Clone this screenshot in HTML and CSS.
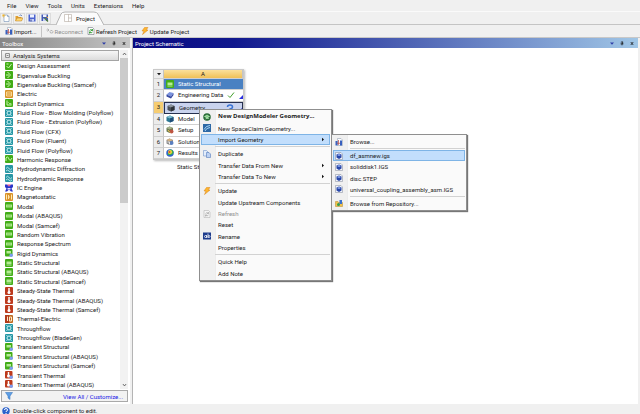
FILE: index.html
```html
<!DOCTYPE html>
<html lang="en">
<head>
    <meta charset="UTF-8">
    <meta name="viewport" content="width=device-width, initial-scale=1.0">
    <title>Workbench</title>
    <link rel="stylesheet" href="styles.css">
</head>
<body>
    <!-- Icon set -->
    <svg class="sprite" aria-hidden="true">
        <symbol id="check" viewBox="0 0 16 16"><rect width="16" height="16" rx="2" fill="#43ad18"/><path d="M3 8l4 4 6-8M3 4h4" stroke="#c9f5ad" stroke-width="2" fill="none"/></symbol>
        <symbol id="buckling" viewBox="0 0 16 16"><rect width="16" height="16" rx="2" fill="#43ad18"/><path d="M5 2l6 6-6 6M2 8h6" stroke="#c9f5ad" stroke-width="2" fill="none"/></symbol>
        <symbol id="electric" viewBox="0 0 16 16"><rect width="16" height="16" rx="2" fill="#d9932a"/><path d="M3 4v8h10V4zM6 6v4M10 6v4" stroke="#ffe9b0" stroke-width="1.6" fill="none"/></symbol>
        <symbol id="explicit" viewBox="0 0 16 16"><rect width="16" height="16" rx="2" fill="#43ad18"/><path d="M4 3v9h9M7 7l2 2 4 1" stroke="#c9f5ad" stroke-width="2" fill="none"/></symbol>
        <symbol id="fluid" viewBox="0 0 16 16"><rect width="16" height="16" rx="2" fill="#2796a4"/><circle cx="8" cy="8" r="4" stroke="#d5f8fa" stroke-width="2" fill="#2796a4"/><path d="M2 3h3M11 3h3M2 13h3M11 13h3" stroke="#9fe0e4" stroke-width="1.5"/></symbol>
        <symbol id="harmonic" viewBox="0 0 16 16"><rect width="16" height="16" rx="2" fill="#43ad18"/><path d="M2 12V6q3-5 5 0t3 5 4-5" stroke="#c9f5ad" stroke-width="2" fill="none"/></symbol>
        <symbol id="hydro" viewBox="0 0 16 16"><rect width="16" height="16" rx="2" fill="#2796a4"/><path d="M2 7q3-5 6 0t6 0M2 12q3-4 6 0t6 0" stroke="#c5eff2" stroke-width="1.8" fill="none"/></symbol>
        <symbol id="engine" viewBox="0 0 16 16"><path d="M0 1h4l4 4 4-4h4v5l-3 3 3 6h-4l-4-4-4 4H0l3-6-3-3z" fill="#2b35c8"/><path d="M4 1h8L8 5z" fill="#e64a8a"/><path d="M5 8h6v3H5z" fill="#e8e0ff"/></symbol>
        <symbol id="magnet" viewBox="0 0 16 16"><rect width="16" height="16" rx="2" fill="#d9932a"/><path d="M3 3v10M13 3v10M6 8h4M7 4v8" stroke="#ffe9b0" stroke-width="2"/></symbol>
        <symbol id="modal" viewBox="0 0 16 16"><rect width="16" height="16" rx="2" fill="#43ad18"/><path d="M3 5v6M6 4v8M10 4v8M13 5v6M3 8h10" stroke="#c9f5ad" stroke-width="1.5"/></symbol>
        <symbol id="static" viewBox="0 0 16 16"><rect width="16" height="16" rx="2" fill="#43ad18"/><rect x="3" y="5" width="10" height="5" fill="#b6eb96"/><path d="M3 12h10" stroke="#e0fbd0" stroke-width="1.5"/></symbol>
        <symbol id="transient" viewBox="0 0 16 16"><rect width="15" height="15" rx="2" fill="#43ad18"/><rect x="3" y="4" width="9" height="5" fill="#b6eb96"/><circle cx="12.500" cy="12.500" r="3.500" fill="#7d9cf0"/></symbol>
        <symbol id="thermal" viewBox="0 0 16 16"><rect width="16" height="16" rx="2" fill="#bd3a1d"/><path d="M8 2v8" stroke="#fff" stroke-width="3"/><circle cx="8" cy="11" r="3" fill="#fff"/></symbol>
        <symbol id="thermalelectric" viewBox="0 0 16 16"><rect width="16" height="16" rx="2" fill="#c06a20"/><rect width="8" height="16" fill="#b23c1c"/><path d="M5 3v9M9 4v8h4V4z" stroke="#ffe9c8" stroke-width="2" fill="none"/></symbol>
        <symbol id="transthermal" viewBox="0 0 16 16"><rect width="15" height="15" rx="2" fill="#bd3a1d"/><path d="M7 2v8" stroke="#fff" stroke-width="3"/><circle cx="7" cy="10" r="3" fill="#fff"/><circle cx="12.500" cy="12.500" r="3.500" fill="#7d9cf0"/></symbol>
        <symbol id="new" viewBox="0 0 16 16"><path d="M4 2h7l3 3v10H4z" fill="#fff" stroke="#5b7da8"/><path d="M11 2v3h3" fill="none" stroke="#5b7da8"/><path d="M3 0v7M0 3h7M1 1l4 4M5 1L1 5" stroke="#f0b429" stroke-width="1.2"/></symbol>
        <symbol id="open" viewBox="0 0 16 16"><path d="M1 4h5l1 2h6v8H1z" fill="#e0a030"/><path d="M4 8h12l-3 6H1z" fill="#ffd873" stroke="#b87818"/><path d="M9 3q3-3 5 1" stroke="#4a6cb0" fill="none" stroke-width="1.500"/></symbol>
        <symbol id="save" viewBox="0 0 16 16"><path d="M1 1h14v14H1z" fill="#4a62cf"/><rect x="4" y="1" width="8" height="6" fill="#eef2ff"/><rect x="4" y="10" width="8" height="5" fill="#c4cef4"/><rect x="5" y="11" width="2" height="4" fill="#27388f"/></symbol>
        <symbol id="saveas" viewBox="0 0 16 16"><path d="M1 1h13v13H1z" fill="#445bb6"/><rect x="4" y="1" width="7" height="5" fill="#eef2ff"/><rect x="4" y="9" width="6" height="5" fill="#c4cef4"/><path d="M7 8l7 7" stroke="#4e7d3a" stroke-width="2.500"/><path d="M11 5l3 3" stroke="#f0b429" stroke-width="2"/></symbol>
        <symbol id="project" viewBox="0 0 16 16"><path d="M1 1h14v14H1zM9 1v14M9 8h6" fill="#fff" stroke="#a79a8e"/></symbol>
        <symbol id="import" viewBox="0 0 16 16"><path d="M5 1h7l3 3v11H5z" fill="#fff" stroke="#8190a8"/><path d="M1 6h4v9H1zM10 5h4v10h-4z" fill="#3560c0"/><path d="M7 4v8M4 9l3 4 3-4" stroke="#b54b48" stroke-width="1.500" fill="none"/></symbol>
        <symbol id="reconnect" viewBox="0 0 16 16"><path d="M1 6h5M3 3l3 3-3 3M8 9a3 3 0 1 1 5 3H9z" stroke="#aaa" stroke-width="1.600" fill="none"/></symbol>
        <symbol id="refresh" viewBox="0 0 16 16"><path d="M2 1h9l3 3v11H2z" fill="#fff" stroke="#59616d"/><path d="M5 7q3-4 6 0M11 4v3H8M11 10q-3 4-6 0M5 13v-3h3" stroke="#269226" stroke-width="1.700" fill="none"/></symbol>
        <symbol id="refreshoff" viewBox="0 0 16 16"><path d="M2 1h9l3 3v11H2z" fill="#f5f5f5" stroke="#aaa"/><path d="M5 7q3-4 6 0M11 4v3H8M11 10q-3 4-6 0M5 13v-3h3" stroke="#aaa" stroke-width="1.500" fill="none"/></symbol>
        <symbol id="bolt" viewBox="0 0 16 16"><path d="M7 1h7l-4 5h4L3 15l3-7H2z" fill="#ffb62e" stroke="#d98212"/></symbol>
        <symbol id="pin" viewBox="0 0 16 16"><path d="M5 1h6v9H5zM2 10h12M8 10v6M10 1v9" fill="none" stroke="currentColor" stroke-width="2"/></symbol>
        <symbol id="close" viewBox="0 0 16 16"><path d="M3 2l10 12M13 2L3 14" stroke="currentColor" stroke-width="3"/></symbol>
        <symbol id="down" viewBox="0 0 16 16"><path d="M0 4h16l-8 9z" fill="currentColor"/></symbol>
        <symbol id="chevup" viewBox="0 0 16 16"><path d="M3 11l5-6 5 6" fill="none" stroke="#444" stroke-width="2.500"/></symbol>
        <symbol id="chevdown" viewBox="0 0 16 16"><path d="M3 5l5 6 5-6" fill="none" stroke="#444" stroke-width="2.500"/></symbol>
        <symbol id="minus" viewBox="0 0 16 16"><path d="M2 2h12v12H2zM5 8h6" fill="#fff" stroke="#444" stroke-width="2"/></symbol>
        <symbol id="filter" viewBox="0 0 16 16"><path d="M1 1h14l-5 7v7l-4-3V8z" fill="#5e9fe6" stroke="#2d6cba"/></symbol>
        <symbol id="help" viewBox="0 0 16 16"><circle cx="8" cy="8" r="7.500" fill="#2c62cc"/><path d="M5 6q0-3 3-3t3 3q0 2-3 3v1M8 12v2" stroke="#fff" stroke-width="2" fill="none"/></symbol>
        <symbol id="book" viewBox="0 0 16 16"><path d="M1 7l6-5 8 2-5 7z" fill="#7b93dd"/><path d="M1 7l9 4 5-7v4l-5 7-9-4z" fill="#3447a0"/></symbol>
        <symbol id="cube" viewBox="0 0 16 16"><path d="M8 1l7 3v8l-7 3-7-3V4z" fill="#4b5056"/><path d="M8 1l7 3-7 3-7-3z" fill="#8d949c"/><path d="M8 7l7-3v8l-7 3z" fill="#2e3237"/></symbol>
        <symbol id="model" viewBox="0 0 16 16"><path d="M8 1l7 3v8l-7 3-7-3V4z" fill="#2c7793"/><path d="M8 1l7 3-7 3-7-3z" fill="#80bfd0"/><path d="M8 7l7-3v8l-7 3z" fill="#204e7a"/></symbol>
        <symbol id="setup" viewBox="0 0 16 16"><path d="M7 1l7 3v7l-7 3-6-3V4z" fill="#6a7a52"/><path d="M7 1l7 3-7 3-6-3z" fill="#a8b48b"/><circle cx="11" cy="11" r="4" fill="#bd5442"/><path d="M4 8l4 5" stroke="#e8c24e" stroke-width="2"/></symbol>
        <symbol id="solution" viewBox="0 0 16 16"><path d="M7 1l7 3v7l-7 3-6-3V4z" fill="#8b8b8b"/><path d="M7 1l7 3-7 3-6-3z" fill="#d5b282"/><circle cx="11" cy="10" r="4" fill="#5a7fc0"/><path d="M3 8h4v5" stroke="#e6e6e6" stroke-width="2" fill="none"/></symbol>
        <symbol id="results" viewBox="0 0 16 16"><circle cx="8" cy="8" r="7.500" fill="#3165c8"/><path d="M8 1a7 7 0 0 1 7 7q-4 6-12 3z" fill="#3fae49"/><circle cx="8" cy="6" r="4" fill="#f4dc3e"/><circle cx="7" cy="6" r="2" fill="#e4402c"/></symbol>
        <symbol id="tick" viewBox="0 0 16 16"><path d="M2 9l4 4 8-10" stroke="#43a02b" stroke-width="2" fill="none"/></symbol>
        <symbol id="question" viewBox="0 0 16 16"><path d="M3 6q0-4 5-4t5 4q0 3-5 4v1M8 13v3" stroke="#3973d4" stroke-width="3" fill="none"/></symbol>
        <symbol id="corner" viewBox="0 0 16 16"><path d="M16 0v16H0z" fill="#2a2ee0"/></symbol>
        <symbol id="dm" viewBox="0 0 16 16"><circle cx="8" cy="8" r="7.500" fill="#276b35"/><path d="M3 7l5-3 5 3-5 3zM5 12l3-2 4 1" fill="#83d884" stroke="#e6ffe4"/></symbol>
        <symbol id="spaceclaim" viewBox="0 0 16 16"><rect width="16" height="16" fill="#2d68a5"/><path d="M2 11q4-8 12-8M4 14q2-6 10-7" stroke="#a8d6f5" stroke-width="2" fill="none"/></symbol>
        <symbol id="copy" viewBox="0 0 16 16"><path d="M1 1h6l3 3v8H1z" fill="#e3edfb" stroke="#5a82c2"/><path d="M7 5h5l3 3v7H7z" fill="#bcd1f2" stroke="#3f68b3"/></symbol>
        <symbol id="rename" viewBox="0 0 16 16"><rect y="1" width="16" height="14" fill="#1d3b8c"/><circle cx="5" cy="9" r="2" stroke="#fff" stroke-width="1.500" fill="none"/><path d="M7 6v6M10 3v9" stroke="#fff" stroke-width="1.500"/><circle cx="12" cy="9" r="2" stroke="#fff" stroke-width="1.500" fill="none"/></symbol>
        <symbol id="geofile" viewBox="0 0 16 16"><path d="M1 1h11l3 3v11H1z" fill="#f2f4fa" stroke="#7c8494"/><path d="M8 3l5 2v6l-5 3-5-3V5z" fill="#2746a8"/><path d="M8 4l4 2-4 2-4-2z" fill="#93aef0"/></symbol>
        <symbol id="repo" viewBox="0 0 16 16"><path d="M1 5h5l1 2h8v8H1z" fill="#f0c24e" stroke="#b5862a"/><circle cx="7" cy="11" r="3" fill="#2e9c50"/><path d="M9 2h5v8H9z" fill="#3a71cc"/></symbol>
        <symbol id="arrow" viewBox="0 0 16 16"><path d="M4 1l8 7-8 7z" fill="#111"/></symbol>
    </svg>

    <nav class="menubar">
        <a href="#">File</a>
        <a href="#">View</a>
        <a href="#">Tools</a>
        <a href="#">Units</a>
        <a href="#">Extensions</a>
        <a href="#">Help</a>
    </nav>

    <div class="tabbar">
        <button class="tool" aria-label="New"><svg class="icon"><use href="#new"/></svg></button>
        <button class="tool" aria-label="Open"><svg class="icon"><use href="#open"/></svg></button>
        <button class="tool" aria-label="Save"><svg class="icon"><use href="#save"/></svg></button>
        <button class="tool" aria-label="Save As"><svg class="icon"><use href="#saveas"/></svg></button>
        <button class="tab">
            <svg class="tab-shape" viewBox="0 0 48 14" preserveAspectRatio="none"><path d="M0 14L5 3Q6 1 9 1H38Q41 1 42 3L48 14" fill="#fbfbfb" stroke="#b4b4b4"/></svg>
            <svg class="icon"><use href="#project"/></svg>
            <span>Project</span>
        </button>
    </div>

    <div class="toolbar">
        <button><svg class="icon"><use href="#import"/></svg>Import...</button>
        <span class="divider"></span>
        <button disabled><svg class="icon"><use href="#reconnect"/></svg>Reconnect</button>
        <button><svg class="icon"><use href="#refresh"/></svg>Refresh Project</button>
        <button><svg class="icon"><use href="#bolt"/></svg>Update Project</button>
    </div>

    <main class="workspace">
        <section class="toolbox">
            <header class="panel-header gray">
                <h2>Toolbox</h2>
                <button class="blue" aria-label="Options"><svg><use href="#down"/></svg></button>
                <button aria-label="Pin"><svg><use href="#pin"/></svg></button>
                <button aria-label="Close"><svg><use href="#close"/></svg></button>
            </header>
            <div class="toolbox-body">
                <div class="systems">
                    <button class="group"><svg><use href="#minus"/></svg>Analysis Systems</button>
                    <ul>
                        <li><svg class="icon"><use href="#check"/></svg>Design Assessment</li>
                        <li><svg class="icon"><use href="#buckling"/></svg>Eigenvalue Buckling</li>
                        <li><svg class="icon"><use href="#buckling"/></svg>Eigenvalue Buckling (Samcef)</li>
                        <li><svg class="icon"><use href="#electric"/></svg>Electric</li>
                        <li><svg class="icon"><use href="#explicit"/></svg>Explicit Dynamics</li>
                        <li><svg class="icon"><use href="#fluid"/></svg>Fluid Flow - Blow Molding (Polyflow)</li>
                        <li><svg class="icon"><use href="#fluid"/></svg>Fluid Flow - Extrusion (Polyflow)</li>
                        <li><svg class="icon"><use href="#fluid"/></svg>Fluid Flow (CFX)</li>
                        <li><svg class="icon"><use href="#fluid"/></svg>Fluid Flow (Fluent)</li>
                        <li><svg class="icon"><use href="#fluid"/></svg>Fluid Flow (Polyflow)</li>
                        <li><svg class="icon"><use href="#harmonic"/></svg>Harmonic Response</li>
                        <li><svg class="icon"><use href="#hydro"/></svg>Hydrodynamic Diffraction</li>
                        <li><svg class="icon"><use href="#hydro"/></svg>Hydrodynamic Response</li>
                        <li><svg class="icon"><use href="#engine"/></svg>IC Engine</li>
                        <li><svg class="icon"><use href="#magnet"/></svg>Magnetostatic</li>
                        <li><svg class="icon"><use href="#modal"/></svg>Modal</li>
                        <li><svg class="icon"><use href="#modal"/></svg>Modal (ABAQUS)</li>
                        <li><svg class="icon"><use href="#modal"/></svg>Modal (Samcef)</li>
                        <li><svg class="icon"><use href="#modal"/></svg>Random Vibration</li>
                        <li><svg class="icon"><use href="#modal"/></svg>Response Spectrum</li>
                        <li><svg class="icon"><use href="#transient"/></svg>Rigid Dynamics</li>
                        <li><svg class="icon"><use href="#static"/></svg>Static Structural</li>
                        <li><svg class="icon"><use href="#static"/></svg>Static Structural (ABAQUS)</li>
                        <li><svg class="icon"><use href="#static"/></svg>Static Structural (Samcef)</li>
                        <li><svg class="icon"><use href="#thermal"/></svg>Steady-State Thermal</li>
                        <li><svg class="icon"><use href="#thermal"/></svg>Steady-State Thermal (ABAQUS)</li>
                        <li><svg class="icon"><use href="#thermal"/></svg>Steady-State Thermal (Samcef)</li>
                        <li><svg class="icon"><use href="#thermalelectric"/></svg>Thermal-Electric</li>
                        <li><svg class="icon"><use href="#fluid"/></svg>Throughflow</li>
                        <li><svg class="icon"><use href="#fluid"/></svg>Throughflow (BladeGen)</li>
                        <li><svg class="icon"><use href="#transient"/></svg>Transient Structural</li>
                        <li><svg class="icon"><use href="#transient"/></svg>Transient Structural (ABAQUS)</li>
                        <li><svg class="icon"><use href="#transient"/></svg>Transient Structural (Samcef)</li>
                        <li><svg class="icon"><use href="#transthermal"/></svg>Transient Thermal</li>
                        <li><svg class="icon"><use href="#transthermal"/></svg>Transient Thermal (ABAQUS)</li>
                    </ul>
                </div>
                <div class="scrollbar">
                    <svg><use href="#chevup"/></svg>
                    <div class="track"><div class="thumb"></div></div>
                    <svg><use href="#chevdown"/></svg>
                </div>
            </div>
            <div class="filter">
                <svg class="icon"><use href="#filter"/></svg>
                <a href="#">View All / Customize...</a>
            </div>
        </section>

        <section class="schematic">
            <header class="panel-header navy">
                <h2>Project Schematic</h2>
                <button class="blue" aria-label="Options"><svg><use href="#down"/></svg></button>
                <button aria-label="Pin"><svg><use href="#pin"/></svg></button>
                <button aria-label="Close"><svg><use href="#close"/></svg></button>
            </header>
            <div class="canvas">
                <div class="system">
                    <table>
                        <thead>
                            <tr><th><svg class="mini"><use href="#down"/></svg></th><th class="column">A</th></tr>
                        </thead>
                        <tbody>
                            <tr class="title"><th>1</th><td><div class="cell"><svg class="icon"><use href="#static"/></svg>Static Structural</div></td></tr>
                            <tr><th>2</th><td><div class="cell"><svg class="icon"><use href="#book"/></svg>Engineering Data<span class="state"><svg class="icon"><use href="#tick"/></svg><svg class="mini"><use href="#corner"/></svg></span></div></td></tr>
                            <tr class="selected"><th>3</th><td><div class="cell"><svg class="icon"><use href="#cube"/></svg>Geometry<span class="state"><svg class="icon"><use href="#question"/></svg><svg class="mini"><use href="#corner"/></svg></span></div></td></tr>
                            <tr><th>4</th><td><div class="cell"><svg class="icon"><use href="#model"/></svg>Model</div></td></tr>
                            <tr><th>5</th><td><div class="cell"><svg class="icon"><use href="#setup"/></svg>Setup</div></td></tr>
                            <tr><th>6</th><td><div class="cell"><svg class="icon"><use href="#solution"/></svg>Solution</div></td></tr>
                            <tr><th>7</th><td><div class="cell"><svg class="icon"><use href="#results"/></svg>Results</div></td></tr>
                        </tbody>
                    </table>
                    <p>Static Structural</p>
                </div>

                <div class="menu context-menu" role="menu">
                    <button class="default"><svg class="icon"><use href="#dm"/></svg>New DesignModeler Geometry...</button>
                    <button><svg class="icon"><use href="#spaceclaim"/></svg>New SpaceClaim Geometry...</button>
                    <button class="active">Import Geometry<svg class="arrow"><use href="#arrow"/></svg></button>
                    <hr>
                    <button><svg class="icon"><use href="#copy"/></svg>Duplicate</button>
                    <button>Transfer Data From New<svg class="arrow"><use href="#arrow"/></svg></button>
                    <button>Transfer Data To New<svg class="arrow"><use href="#arrow"/></svg></button>
                    <hr>
                    <button><svg class="icon"><use href="#bolt"/></svg>Update</button>
                    <button>Update Upstream Components</button>
                    <button disabled><svg class="icon"><use href="#refreshoff"/></svg>Refresh</button>
                    <button>Reset</button>
                    <button><svg class="icon"><use href="#rename"/></svg>Rename</button>
                    <button>Properties</button>
                    <hr>
                    <button>Quick Help</button>
                    <button>Add Note</button>
                </div>

                <div class="menu sub-menu" role="menu">
                    <button><svg class="icon"><use href="#import"/></svg>Browse...</button>
                    <hr>
                    <button class="active"><svg class="icon"><use href="#geofile"/></svg>df_asmnew.igs</button>
                    <button><svg class="icon"><use href="#geofile"/></svg>soliddisk1.IGS</button>
                    <button><svg class="icon"><use href="#geofile"/></svg>disc.STEP</button>
                    <button><svg class="icon"><use href="#geofile"/></svg>universal_coupling_assembly_asm.IGS</button>
                    <hr>
                    <button><svg class="icon"><use href="#repo"/></svg>Browse from Repository...</button>
                </div>
            </div>
        </section>
    </main>

    <footer class="statusbar">
        <svg class="icon"><use href="#help"/></svg>
        Double-click component to edit.
    </footer>
</body>
</html>
```
FILE: styles.css
```css
* {
    box-sizing: border-box;
}
body {
    display: flex;
    flex-direction: column;
    height: 100vh;
    margin: 0;
    background-color: #f0f0f0;
    color: #1a1a1a;
    font-family: Roboto, "Noto Sans", sans-serif;
    font-size: 6px;
    line-height: 9px;
    overflow: hidden;
}
button {
    display: flex;
    align-items: center;
    margin: 0;
    padding: 0;
    border: 0;
    background: none;
    color: inherit;
    font: inherit;
    white-space: nowrap;
}
a {
    color: inherit;
    text-decoration: none;
}
svg {
    flex: none;
}
.sprite {
    position: absolute;
    width: 0;
    height: 0;
}
.icon {
    width: 8px;
    height: 8px;
}
.mini {
    display: block;
    width: 4px;
    height: 4px;
}

/* Menu, tabs and toolbar */
.menubar {
    display: flex;
    align-items: center;
    gap: 9px;
    height: 11px;
    padding: 0 7px;
}
.tabbar {
    display: flex;
    align-items: center;
    gap: 1px;
    height: 14px;
    border-top: 1px solid #fafafa;
    border-bottom: 1px solid #c4c4c4;
}
.tool {
    justify-content: center;
    width: 12px;
    height: 11px;
    border: 1px solid #dcdcdc;
}
.tab {
    position: relative;
    gap: 4px;
    height: 14px;
    margin-left: 4px;
    padding: 0 9px 0 8px;
}
.tab-shape {
    position: absolute;
    top: 0;
    left: 0;
    width: 100%;
    height: 100%;
}
.tab .icon,
.tab span {
    position: relative;
}
.toolbar {
    display: flex;
    align-items: center;
    gap: 4px;
    height: 13px;
    padding-left: 5px;
    border-bottom: 1px solid #c8c8c8;
}
.toolbar button {
    gap: 1px;
}
.toolbar button:disabled,
.menu button:disabled {
    color: #8e8e8e;
}
.divider {
    width: 1px;
    height: 11px;
    background-color: #c4c4c4;
}

/* Panels */
.workspace {
    display: flex;
    flex: 1;
    gap: 2px;
    min-height: 0;
    padding-right: 2px;
}
.panel-header {
    display: flex;
    align-items: center;
    gap: 6px;
    height: 10px;
    padding: 0 4px 0 2px;
    color: #111;
}
.panel-header h2 {
    flex: 1;
    margin: 0;
    color: #fff;
    font-size: 6px;
    font-weight: normal;
}
.panel-header svg {
    width: 4px;
    height: 5px;
}
.panel-header .blue {
    color: #2f3ea8;
}
.gray {
    background: linear-gradient(to right, #868686, #c6c6c6);
}
.navy {
    background: linear-gradient(to right, #0a0a80, #10188e 20%, #a0c6e6);
}
.toolbox {
    display: flex;
    flex-direction: column;
    width: 130px;
    background-color: #fff;
}
.toolbox-body {
    display: flex;
    flex: 1;
    gap: 1px;
    min-height: 0;
    padding: 2px 2px 0 1px;
}
.systems {
    display: flex;
    flex: 1;
    flex-direction: column;
}
.group {
    gap: 3px;
    height: 11px;
    padding-left: 3px;
    border: 1px solid #a4a4a4;
    background: linear-gradient(#f7f7f7, #dcdcdc);
}
.group svg {
    width: 5px;
    height: 5px;
}
.systems ul {
    display: flex;
    flex: 1;
    flex-direction: column;
    margin: 0;
    padding: 0;
    list-style: none;
}
.systems li {
    display: flex;
    flex: 1;
    align-items: center;
    gap: 4px;
    padding-left: 4px;
    white-space: nowrap;
}
.scrollbar {
    display: flex;
    flex-direction: column;
    align-items: center;
    width: 8px;
    background-color: #f2f2f2;
}
.scrollbar svg {
    width: 5px;
    height: 8px;
}
.track {
    flex: 1;
    width: 100%;
}
.thumb {
    height: 45%;
    background-color: #cbcbcb;
}
.filter {
    display: flex;
    align-items: center;
    justify-content: space-between;
    height: 12px;
    margin: 1px 2px 2px 1px;
    padding: 0 4px 0 3px;
    border: 1px solid #a9a9a9;
    background-color: #f2f2f2;
}
.filter a {
    color: #1717e6;
}
.schematic {
    display: flex;
    flex: 1;
    flex-direction: column;
    border-left: 1px solid #b4b4b4;
    background-color: #fff;
}

/* Schematic canvas */
.canvas {
    position: relative;
    flex: 1;
}
.system {
    position: absolute;
    top: 21px;
    left: 20px;
    width: 91px;
}
.system table {
    width: 100%;
    height: 91px;
    border: 1px solid #c9c9c9;
    border-spacing: 0;
    box-shadow: 1px 1px 2px #bbb;
    table-layout: fixed;
}
.system th,
.system td {
    padding: 0;
    border-bottom: 1px solid #d0d0d0;
    background-color: #fff;
    line-height: 8px;
    white-space: nowrap;
}
.system th {
    width: 10px;
    border-right: 1px solid #c4c4c4;
    background-color: #ececec;
    font-weight: normal;
    text-align: center;
}
.system .mini {
    margin: 0 auto;
}
.system .column {
    width: auto;
    background: linear-gradient(#fbe09a, #efc057);
}
.cell {
    display: flex;
    align-items: center;
    gap: 4px;
    padding-left: 2px;
}
.system .title td {
    background-color: #4a81c2;
    color: #fff;
}
.system .selected th {
    background-color: #f6cd72;
}
.system .selected td {
    border: 1px solid #26304f;
    background-color: #c9d3ee;
}
.state {
    display: flex;
    align-items: flex-end;
    gap: 4px;
    margin-left: auto;
}
.system p {
    margin: 2px 0 0 24px;
}

/* Menus */
.menu {
    position: absolute;
    display: flex;
    flex-direction: column;
    padding: 1px;
    border: 1px solid #8f8f8f;
    background: linear-gradient(to right, #f0f0f0 15px, #dedede 15px, #fafafa 16px);
    box-shadow: 1px 1px 1px #777;
}
.context-menu {
    top: 61px;
    left: 66px;
    width: 133px;
    height: 172px;
}
.sub-menu {
    top: 86px;
    left: 198px;
    width: 136px;
    height: 77px;
}
.menu button {
    position: relative;
    flex: 1;
    padding-left: 16px;
    border: 1px solid transparent;
}
.menu .icon {
    position: absolute;
    left: 1px;
}
.menu .arrow {
    width: 4px;
    height: 5px;
    margin-left: auto;
    margin-right: 4px;
}
.menu .default {
    font-family: "Open Sans", "Noto Sans", sans-serif;
    font-weight: bold;
}
.menu .active {
    border-color: #7eb4e6;
    background-color: #c2defc;
}
.menu hr {
    width: 115px;
    height: 1px;
    margin: 1px 0 1px auto;
    border: 0;
    background-color: #d2d2d2;
}

.statusbar {
    display: flex;
    align-items: center;
    gap: 3px;
    height: 10px;
    padding: 3px 2px 0;
}
```
